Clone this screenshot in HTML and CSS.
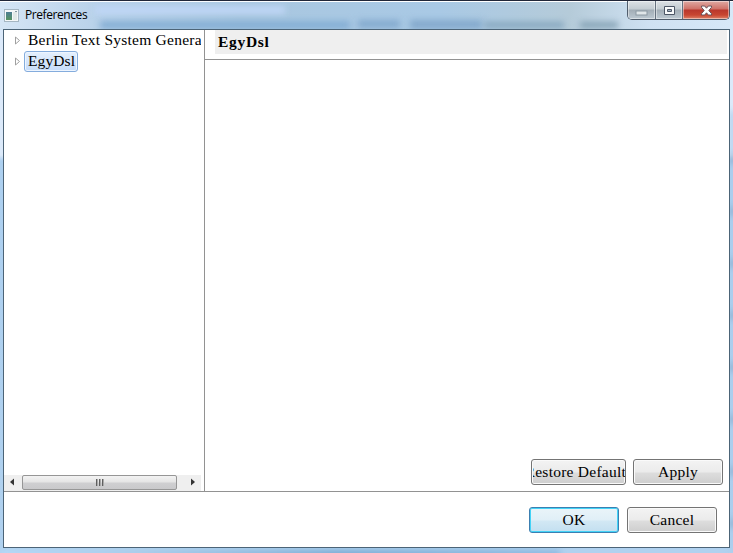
FILE: index.html
```html
<!DOCTYPE html>
<html lang="en">
<head>
<meta charset="utf-8">
<title>Preferences</title>
<link rel="stylesheet" href="styles.css">
</head>
<body>
<div class="window">
  <div class="glass" aria-hidden="true">
    <i class="smudge s1"></i><i class="smudge s2"></i><i class="smudge s3"></i><i class="smudge s4"></i><i class="smudge s5"></i><i class="smudge s6"></i><i class="smudge s7"></i><i class="smudge s8"></i>
  </div>
  <header class="titlebar">
    <svg class="app-icon" width="15" height="13" viewBox="0 0 15 13">
      <defs><linearGradient id="pane" x1="0" y1="0" x2="0" y2="1"><stop offset="0" stop-color="#4c7d94"/><stop offset="1" stop-color="#569461"/></linearGradient></defs>
      <rect x=".5" y=".5" width="14" height="12" fill="#f5f8f9" stroke="#a5b6c2"/>
      <rect x="2" y="3" width="6" height="8" fill="url(#pane)"/>
      <path d="M9 3h4v8H9z" fill="#e1e8e7"/><path d="M11 2h2v1h-2z" fill="#8296a2"/>
    </svg>
    <span class="title">Preferences</span>
    <div class="controls">
      <span class="control minimize"><svg width="13" height="6" viewBox="0 0 13 6"><rect x="1" y="1" width="11" height="4" fill="#e0e6e9" stroke="#8c99a3"/></svg></span>
      <span class="control maximize"><svg width="13" height="11" viewBox="0 0 13 11"><path d="M1.5 1.5h10v8h-10z" fill="#f8fafb" stroke="#4c5666"/><path d="M4.5 4.5h4v2h-4z" fill="#a1b1bf" stroke="#4c5666"/></svg></span>
      <span class="control close"><svg width="13" height="11" viewBox="0 0 13 11"><path d="M1.5 1h3.2l1.8 2.2L8.3 1h3.2v1.3L8.8 5.5l2.7 3.2V10H8.3L6.5 7.8 4.7 10H1.5V8.7l2.7-3.2-2.7-3.2z" fill="#fff" stroke="#68545c"/></svg></span>
    </div>
  </header>
  <main class="client">
    <div class="panes">
      <nav class="sidebar">
        <div class="tree">
          <div class="row"><svg class="arrow" width="6" height="9" viewBox="0 0 6 9"><path d="M.5 1v7l4-3.5z" fill="#fff" stroke="#a0a0a0"/></svg><span class="label general">Berlin Text System Genera</span></div>
          <div class="row"><svg class="arrow" width="6" height="9" viewBox="0 0 6 9"><path d="M.5 1v7l4-3.5z" fill="#fff" stroke="#a0a0a0"/></svg><span class="label selected">EgyDsl</span></div>
        </div>
        <div class="scrollbar">
          <svg class="step" width="18" height="15" viewBox="0 0 18 15"><path d="M10 3.5v7l-4-3.5z" fill="#333"/></svg>
          <div class="thumb"><i></i><i></i><i></i></div>
          <svg class="step right" width="18" height="15" viewBox="0 0 18 15"><path d="M5 3.5v7L9 7z" fill="#333"/></svg>
        </div>
      </nav>
      <section class="page">
        <div class="heading"><h1>EgyDsl</h1></div>
        <div class="page-body">
          <button class="restore"><span>Restore Defaults</span></button>
          <button>Apply</button>
        </div>
      </section>
    </div>
    <footer class="footer">
      <button class="primary">OK</button>
      <button>Cancel</button>
    </footer>
  </main>
</div>
</body>
</html>
```

FILE: styles.css
```css
* { box-sizing: border-box; }
body { margin: 0; overflow: hidden; color: #000; font: 15.5px/20px "Liberation Serif", serif; }
svg { display: block; flex: none; }

.window {
  position: relative;
  display: flex;
  flex-direction: column;
  width: 733px;
  height: 553px;
  padding: 0 3px 5px;
  border-top: 1px solid #202638;
  background: linear-gradient(#dceafa 0, #dceafa 154px, #add0f0 160px, #b0d1ef 100%);
}
.glass {
  position: absolute;
  inset: 0;
  overflow: hidden;
  background:
    linear-gradient(#fff 1px, transparent 1px),
    linear-gradient(90deg, #d5e5f5 0, #b9d2ea 95px, #a9c7e0 240px, #a9c9e5 440px, #b5cbd9 570px, #cfe1f2 650px, #d7e8f8 733px) 0 0 / 100% 29px no-repeat;
}
.smudge { position: absolute; filter: blur(3px); }
.s1 { left: 95px; top: 5px; width: 190px; height: 8px; background: #bfd6f6; }
.s2 { left: 100px; top: 20px; width: 250px; height: 8px; background: #84aed4; }
.s3 { left: 358px; top: 19px; width: 42px; height: 8px; background: #83aace; }
.s4 { left: 410px; top: 19px; width: 72px; height: 9px; background: #83a9cc; }
.s5 { left: 484px; top: 21px; width: 80px; height: 6px; background: #83a5bd; }
.s6 { left: 580px; top: 21px; width: 38px; height: 6px; background: #819fb2; }
.s7 { left: 0; top: 549px; width: 560px; height: 8px; background: linear-gradient(90deg, #b5daf8 0, #a8cce9 25%, #78a9d1 60%, #8bb8df); }
.s8 { left: 730px; top: 110px; width: 5px; height: 440px; background: repeating-linear-gradient(#a9cceb 0 40px, #7895b8 52px); }

.titlebar { position: relative; display: flex; flex: none; height: 28px; }
.app-icon { margin: 8px 0 0 1px; }
.title { margin: 5px 0 0 6px; font: 12px/18px "Open Sans", "Noto Sans", sans-serif; letter-spacing: -.42px; }
.controls {
  display: flex;
  width: 103px;
  height: 19px;
  margin-left: auto;
  border: 1px solid #505d6c;
  border-top: 0;
  border-radius: 0 0 5px 5px;
  overflow: hidden;
}
.control { display: grid; place-items: center; width: 28px; border-right: 1px solid #65717f; background: linear-gradient(#dce1e5 0, #c3ccd2 8px, #a2adb6 9px, #bdc9d2 100%); box-shadow: inset 0 0 0 1px #ffffff70; }
.minimize svg { margin-top: 5px; }
.maximize { width: 27px; }
.close { width: 46px; border: 0; background: linear-gradient(#dfaaa4 0, #cf7168 8px, #b9372c 9px, #c84631 14px, #df8268 100%); }

.client { position: relative; display: flex; flex: 1; flex-direction: column; width: 727px; border: 1px solid #4c6477; background: #fff; }
.panes { display: flex; flex: 1; min-height: 0; border-bottom: 1px solid #929292; }
.sidebar { display: flex; flex-direction: column; width: 201px; border-right: 1px solid #929292; }
.tree { flex: 1; }
.row { display: flex; align-items: center; height: 21px; padding-left: 11px; }
.label { height: 21px; margin-left: 3px; padding: 0 3px; border: 1px solid transparent; border-radius: 3px; line-height: 18px; white-space: nowrap; }
.general { width: 178px; padding-right: 0; overflow: hidden; letter-spacing: .24px; }
.selected { width: 54px; border-color: #84acdd; background: linear-gradient(#e5f0fd, #c5dcfa); letter-spacing: .1px; box-shadow: inset 0 0 0 1px #edf5ff; }
.scrollbar { display: flex; width: 197px; height: 16px; background: #efefef; }
.thumb { display: flex; gap: 1px; align-items: center; justify-content: center; width: 155px; height: 15px; border: 1px solid #969696; border-radius: 2px; background: linear-gradient(#f3f3f3 0, #e5e5e5 6px, #cfcfd1 7px, #c9c9cb 100%); }
.thumb i { width: 2px; height: 7px; background: linear-gradient(90deg, #606060 50%, #aaa 50%); }
.right { margin-left: 9px; }
.scrollbar .right { margin-right: -9px; }

.page { display: flex; flex: 1; flex-direction: column; }
.heading { height: 30px; padding: 0 2px 6px 10px; border-bottom: 1px solid #929292; }
h1 { height: 24px; margin: 0; padding-left: 3px; background: #efefef; font: bold 15.5px/24px "Liberation Serif", serif; letter-spacing: .7px; }
.page-body { display: flex; flex: 1; gap: 7px; align-items: flex-end; justify-content: flex-end; padding: 0 6px 6px 0; }
button {
  display: flex;
  align-items: center;
  justify-content: center;
  width: 90px;
  height: 26px;
  padding: 0;
  border: 1px solid #747474;
  border-radius: 3px;
  background: linear-gradient(#f3f3f3 0, #ebebeb 12px, #dddddd 13px, #cecece 100%);
  box-shadow: inset 0 0 0 1px #fafafa;
  color: #000;
  font: 15.5px/20px "Liberation Serif", serif;
  letter-spacing: .25px;
}
.restore { width: 95px; overflow: hidden; }
.restore span { display: flex; flex: none; justify-content: center; width: 92px; overflow: hidden; white-space: nowrap; }
.footer { display: flex; flex: none; gap: 8px; justify-content: flex-end; height: 55px; padding: 15px 12px 0 0; }
.primary { border-color: #3c7fb1; background: linear-gradient(#eaf4f9 0, #e0eff7 12px, #d2e8f4 13px, #c3dff0 100%); box-shadow: inset 0 0 0 1px #43d3f7; }
```
